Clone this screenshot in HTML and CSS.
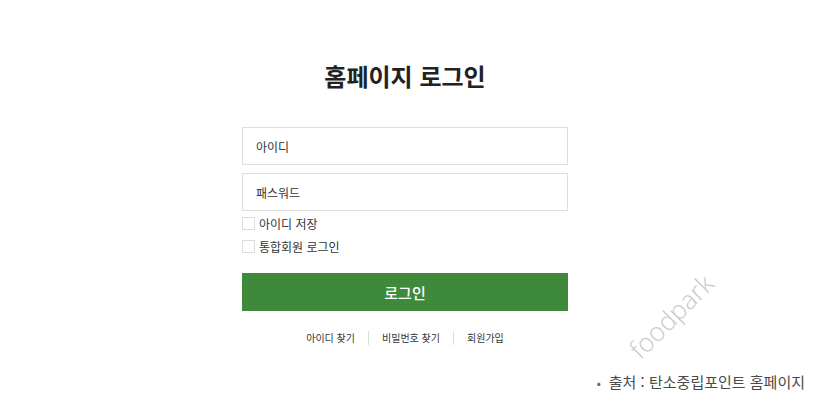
FILE: index.html
```html
<!DOCTYPE html>
<html lang="ko">
<head>
    <meta charset="UTF-8">
    <meta name="viewport" content="width=device-width, initial-scale=1.0">
    <title>홈페이지 로그인</title>
    <link rel="stylesheet" href="styles.css">
</head>
<body>

    <div class="login">
        <h1>홈페이지 로그인</h1>

        <form class="login-form">
            <input type="text" class="field" placeholder="아이디">
            <input type="password" class="field" placeholder="패스워드">

            <label class="check"><span class="box"></span>아이디 저장</label>
            <label class="check"><span class="box"></span>통합회원 로그인</label>

            <button type="button" class="btn-login">로그인</button>
        </form>

        <div class="links">
            <a href="#">아이디 찾기</a>
            <a href="#">비밀번호 찾기</a>
            <a href="#">회원가입</a>
        </div>
    </div>

    <div class="watermark">foodpark</div>

    <p class="source"><span class="dot">•</span>출처 : 탄소중립포인트 홈페이지</p>

</body>
</html>
```

FILE: styles.css
```css
body {
    margin: 0;
    font-family: "Noto Sans CJK KR", "Noto Sans", sans-serif;
    color: #222;
    background: #fff;
}
.login {
    width: 326px;
    margin-left: 242px;
    padding-top: 58px;
}
h1 {
    margin: 0 0 33px;
    font-size: 24px;
    font-weight: 700;
    line-height: 36px;
    text-align: center;
    color: #222;
}
.login-form {
    display: flex;
    flex-direction: column;
}
.field {
    box-sizing: border-box;
    height: 38px;
    margin-bottom: 8px;
    padding: 0 13px;
    border: 1px solid #dedede;
    font-family: inherit;
    font-size: 12px;
    outline: none;
}
.field::placeholder {
    color: #333;
}
.field + .field {
    margin-bottom: 1px;
}
.check {
    display: flex;
    align-items: center;
    height: 23px;
    font-size: 12px;
    color: #333;
}
.box {
    box-sizing: border-box;
    width: 13px;
    height: 13px;
    margin-right: 4px;
    border: 1px solid #ddd;
}
.btn-login {
    height: 38px;
    margin-top: 15px;
    border: none;
    background-color: #3e8a3a;
    color: #fff;
    font-family: inherit;
    font-size: 15px;
    font-weight: 500;
}
.links {
    display: flex;
    justify-content: center;
    margin-top: 20px;
    font-size: 10px;
    line-height: 14px;
}
.links a {
    color: #333;
    text-decoration: none;
    padding: 0 13px;
    border-left: 1px solid #ddd;
}
.links a:first-child {
    border-left: none;
}
.watermark {
    position: absolute;
    left: 618px;
    top: 298px;
    transform: rotate(-45deg);
    font-family: "Open Sans", sans-serif;
    font-size: 26px;
    font-weight: 300;
    color: #cacaca;
}
.source {
    margin: 0;
    position: absolute;
    right: 11px;
    top: 372px;
    font-size: 15px;
    line-height: 20px;
    color: #4a4a4a;
}
.source .dot {
    margin-right: 8px;
    font-size: 12px;
    color: #666;
}
```
